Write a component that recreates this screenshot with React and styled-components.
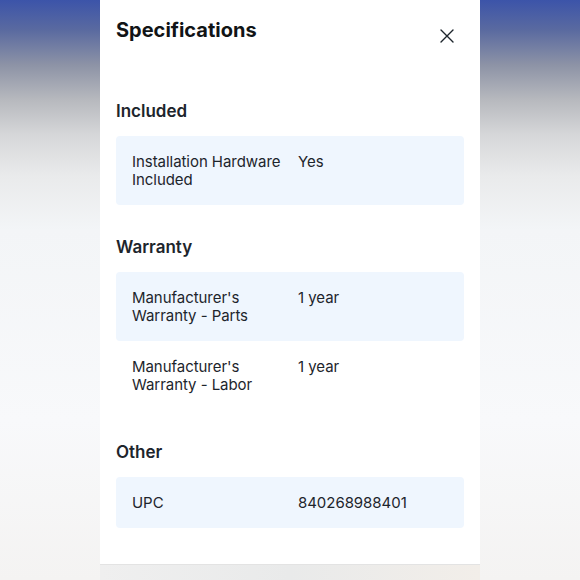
import React from 'react';
import styled, { createGlobalStyle } from 'styled-components';

const GlobalStyle = createGlobalStyle`
  html, body {
    margin: 0;
    padding: 0;
  }
  body {
    font-family: Inter, "Noto Sans", "Liberation Sans", sans-serif;
    color: #1d252c;
  }
`;

const Page = styled.div`
  width: 580px;
  height: 580px;
  overflow: hidden;
  background: linear-gradient(
    to bottom,
    #3c54a9 0px,
    #5a6aa0 30px,
    #8d93a6 65px,
    #b7b9be 100px,
    #d6d7d9 135px,
    #e9eaeb 175px,
    #f3f5f7 230px,
    #f8f9fb 420px,
    #f4f3f2 580px
  );
`;

const Panel = styled.div`
  width: 380px;
  height: 565px;
  margin: 0 auto;
  box-sizing: border-box;
  padding: 0 16px;
  background: #fff;
  border-bottom: 1px solid #e3e3e3;
`;

const Footer = styled.div`
  width: 380px;
  height: 15px;
  margin: 0 auto;
  background: linear-gradient(to right, #efefef 0%, #e9eaea 50%, #f2eee9 100%);
`;

const Header = styled.div`
  display: flex;
  justify-content: space-between;
  align-items: flex-start;
  height: 69px;
  padding-top: 16px;
  box-sizing: border-box;
`;

const Title = styled.h2`
  margin: 0;
  font-size: 20px;
  line-height: 28px;
  font-weight: 700;
  color: #111416;
`;

const CloseButton = styled.button`
  border: 0;
  background: none;
  padding: 0;
  margin: 13px 10px 0 0;
  width: 14px;
  height: 14px;
  display: flex;
  cursor: pointer;
`;

const Section = styled.section`
  margin-top: 30px;
`;

const Heading = styled.h3`
  margin: 0 0 13px;
  font-size: 17px;
  line-height: 24px;
  font-weight: 600;
  color: #1d252c;
`;

const Row = styled.div`
  display: grid;
  grid-template-columns: 1fr 1fr;
  column-gap: 16px;
  padding: 17px 16px 16px;
  border-radius: 4px;
  font-size: 15px;
  line-height: 18px;
  letter-spacing: -0.05px;
  color: #1d252c;
  background: ${p => (p.$shaded ? '#eff6fe' : 'transparent')};
`;

const specs = [
  {
    title: 'Included',
    rows: [['Installation Hardware Included', 'Yes']],
  },
  {
    title: 'Warranty',
    rows: [
      ["Manufacturer's Warranty - Parts", '1 year'],
      ["Manufacturer's Warranty - Labor", '1 year'],
    ],
  },
  {
    title: 'Other',
    rows: [['UPC', '840268988401']],
  },
];

const CloseIcon = () => (
  <svg width="14" height="14" viewBox="0 0 14 14">
    <path d="M1 1 L13 13 M13 1 L1 13" stroke="#1d252c" strokeWidth="1.4" strokeLinecap="round" />
  </svg>
);

export default function App() {
  return (
    <Page>
      <GlobalStyle />
      <Panel>
        <Header>
          <Title>Specifications</Title>
          <CloseButton aria-label="Close">
            <CloseIcon />
          </CloseButton>
        </Header>
        {specs.map(group => (
          <Section key={group.title}>
            <Heading>{group.title}</Heading>
            {group.rows.map(([label, value], i) => (
              <Row key={label} $shaded={i % 2 === 0}>
                <span>{label}</span>
                <span>{value}</span>
              </Row>
            ))}
          </Section>
        ))}
      </Panel>
      <Footer />
    </Page>
  );
}
